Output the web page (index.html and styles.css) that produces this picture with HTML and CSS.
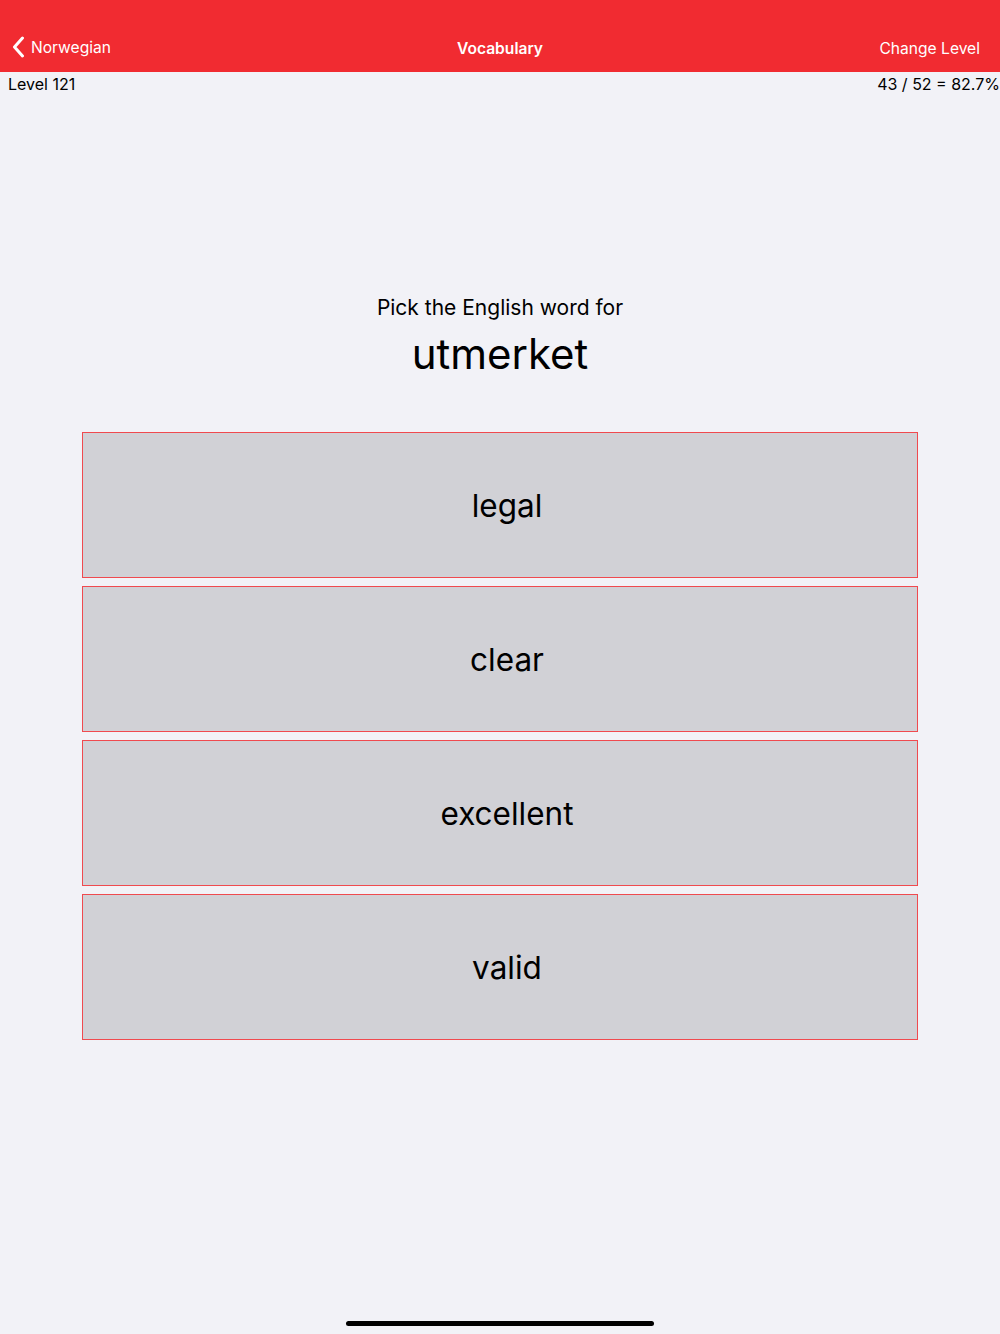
FILE: index.html
```html
<!DOCTYPE html>
<html lang="en">

<head>
  <meta charset="UTF-8">
  <meta name="viewport" content="width=device-width, initial-scale=1.0">
  <title>Vocabulary</title>
  <link rel="stylesheet" href="styles.css">
</head>

<body>
  <header class="navbar">
    <a class="back" href="#">
      <svg class="chevron" width="13" height="22" viewBox="0 0 13 22">
        <path d="M10.5 2 L2.5 11 L10.5 20" fill="none" stroke="#fff" stroke-width="3" stroke-linecap="round" stroke-linejoin="round" />
      </svg>
      <span>Norwegian</span>
    </a>
    <div class="title">Vocabulary</div>
    <a class="action" href="#">Change Level</a>
  </header>

  <div class="status">
    <span>Level 121</span>
    <span>43 / 52 = 82.7%</span>
  </div>

  <main class="quiz">
    <div class="prompt">Pick the English word for</div>
    <div class="word">utmerket</div>
    <div class="choices">
      <button type="button">legal</button>
      <button type="button">clear</button>
      <button type="button">excellent</button>
      <button type="button">valid</button>
    </div>
  </main>

  <div class="home-indicator"></div>
</body>

</html>
```

FILE: styles.css
```css
* {
  box-sizing: border-box;
}

body {
  --nav-red: #f12b31;
  margin: 0;
  height: 1334px;
  display: flex;
  flex-direction: column;
  font-family: Inter, "Liberation Sans", sans-serif;
  background: #f2f2f7;
  color: #000;
}

.navbar {
  height: 72px;
  background: var(--nav-red);
  color: #fff;
  display: flex;
  align-items: flex-end;
  justify-content: space-between;
  padding: 0 20px 14px 12px;
  font-size: 15.6px;
  position: relative;
}

.navbar a {
  color: #fff;
  text-decoration: none;
}

.back {
  display: flex;
  align-items: center;
  gap: 6px;
}

.title {
  position: absolute;
  left: 0;
  right: 0;
  bottom: 14px;
  text-align: center;
  font-weight: 600;
  pointer-events: none;
}

.status {
  display: flex;
  justify-content: space-between;
  padding: 2px 0 0 8px;
  font-size: 16px;
}

.quiz {
  display: flex;
  flex-direction: column;
  align-items: center;
  padding-top: 201px;
  flex: 1;
}

.prompt {
  font-size: 21px;
}

.word {
  font-size: 42px;
  margin-top: 8px;
}

.choices {
  width: 836px;
  margin-top: 53px;
  display: flex;
  flex-direction: column;
  gap: 8px;
}

.choices button {
  height: 146px;
  background: #d1d1d6;
  border: 1px solid #f04a4f;
  border-radius: 0;
  font-family: inherit;
  font-size: 31.5px;
  color: #000;
  padding: 0 0 0 14px;
}

.home-indicator {
  width: 308px;
  height: 5px;
  border-radius: 3px;
  background: #000;
  margin: 0 auto 8px;
}
```
